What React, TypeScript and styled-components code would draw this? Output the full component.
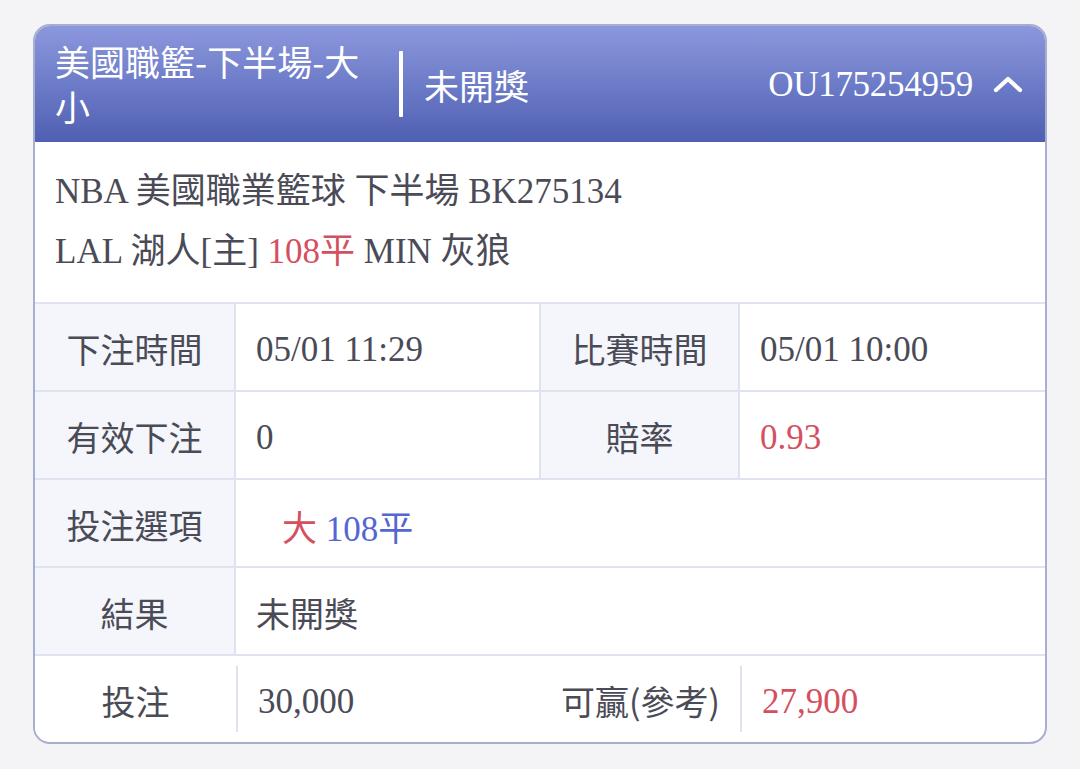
import React from "react";
import styled, { createGlobalStyle } from "styled-components";

const Global = createGlobalStyle`
  html, body { margin: 0; padding: 0; background: #f4f4f6; }
  body { font-family: "Liberation Serif", "Noto Sans CJK TC", serif; }
`;

const Page = styled.div`
  padding: 24px 33px 24px 33px;
`;

const Card = styled.div`
  border: 2px solid #a9aed0;
  border-radius: 17px;
  overflow: hidden;
  background: #fff;
  color: #4a4b56;
`;

const Header = styled.div`
  display: flex;
  align-items: center;
  height: 116px;
  box-sizing: border-box;
  padding: 0 20px 0 20px;
  background: linear-gradient(180deg, #8c98dd 0%, #6a79c6 55%, #4f5fb1 100%);
  color: #fff;
  font-size: 35px;
`;

const Title = styled.div`
  width: 322px;
  line-height: 45px;
  font-family: "Noto Sans CJK TC", sans-serif;
  margin-top: -2px;
`;

const Divider = styled.div`
  width: 4px;
  height: 66px;
  background: #fff;
  margin-left: 22px;
  border-radius: 1px;
`;

const Status = styled.div`
  margin-left: 21px;
  font-family: "Noto Sans CJK TC", sans-serif;
`;

const Spacer = styled.div`
  flex: 1;
`;

const OrderNo = styled.div`
  font-family: "Liberation Serif", serif;
  font-size: 35px;
  letter-spacing: -0.3px;
  padding-top: 2px;
`;

const Chevron = styled.svg`
  margin-left: 20px;
  margin-right: 2px;
`;

const Info = styled.div`
  padding: 20px 20px 20px;
  font-size: 35px;
  line-height: 60px;
`;

const Red = styled.span`
  color: #d4505f;
`;
const Blue = styled.span`
  color: #5466d2;
`;

const Row = styled.div`
  display: grid;
  grid-template-columns: 201px 305px 199px 1fr;
  height: 88px;
  border-top: 2px solid #dfe2ef;
  box-sizing: border-box;
`;

const Label = styled.div<{ $plain?: boolean }>`
  display: flex;
  align-items: center;
  justify-content: center;
  font-family: "Noto Sans CJK TC", sans-serif;
  font-size: 34px;
  padding-top: 2px;
  background: ${(p) => (p.$plain ? "#fff" : "#f5f6fb")};
  border-right: ${(p) => (p.$plain ? "none" : "2px solid #dfe2ef")};
`;

const Value = styled.div<{ $span?: boolean; $last?: boolean; $short?: boolean; $indent?: number }>`
  display: flex;
  align-items: center;
  font-size: 35px;
  padding-top: 5px;
  padding-left: ${(p) => 20 + (p.$indent || 0)}px;
  grid-column: ${(p) => (p.$span ? "span 3" : "auto")};
  border-right: ${(p) => (p.$last || p.$span || p.$short ? "none" : "2px solid #dfe2ef")};
  border-left: ${(p) => (p.$short ? "2px solid #dfe2ef" : "none")};
  margin: ${(p) => (p.$short ? "10px 0" : "0")};
`;

const CjkText = styled.span`
  font-family: "Noto Sans CJK TC", sans-serif;
  font-size: 34px;
  margin-top: -3px;
`;

export default function App() {
  return (
    <>
      <Global />
      <Page>
        <Card>
          <Header>
            <Title>美國職籃-下半場-大小</Title>
            <Divider />
            <Status>未開獎</Status>
            <Spacer />
            <OrderNo>OU175254959</OrderNo>
            <Chevron width="30" height="18" viewBox="0 0 30 18">
              <path d="M3 15 L15 4 L27 15" fill="none" stroke="#fff" strokeWidth="4.2" strokeLinecap="round" strokeLinejoin="round" />
            </Chevron>
          </Header>
          <Info>
            <div>NBA 美國職業籃球 下半場 BK275134</div>
            <div>
              LAL 湖人[主] <Red>108平</Red> MIN 灰狼
            </div>
          </Info>
          <Row>
            <Label>下注時間</Label>
            <Value>05/01 11:29</Value>
            <Label>比賽時間</Label>
            <Value $last>05/01 10:00</Value>
          </Row>
          <Row>
            <Label>有效下注</Label>
            <Value>0</Value>
            <Label>賠率</Label>
            <Value $last>
              <Red>0.93</Red>
            </Value>
          </Row>
          <Row>
            <Label>投注選項</Label>
            <Value $span $indent={26}>
              <Red>大</Red>&nbsp;<Blue>108平</Blue>
            </Value>
          </Row>
          <Row>
            <Label>結果</Label>
            <Value $span>
              <CjkText>未開獎</CjkText>
            </Value>
          </Row>
          <Row>
            <Label $plain>投注</Label>
            <Value $short>30,000</Value>
            <Label $plain>可贏(參考)</Label>
            <Value $short $last>
              <Red>27,900</Red>
            </Value>
          </Row>
        </Card>
      </Page>
    </>
  );
}
